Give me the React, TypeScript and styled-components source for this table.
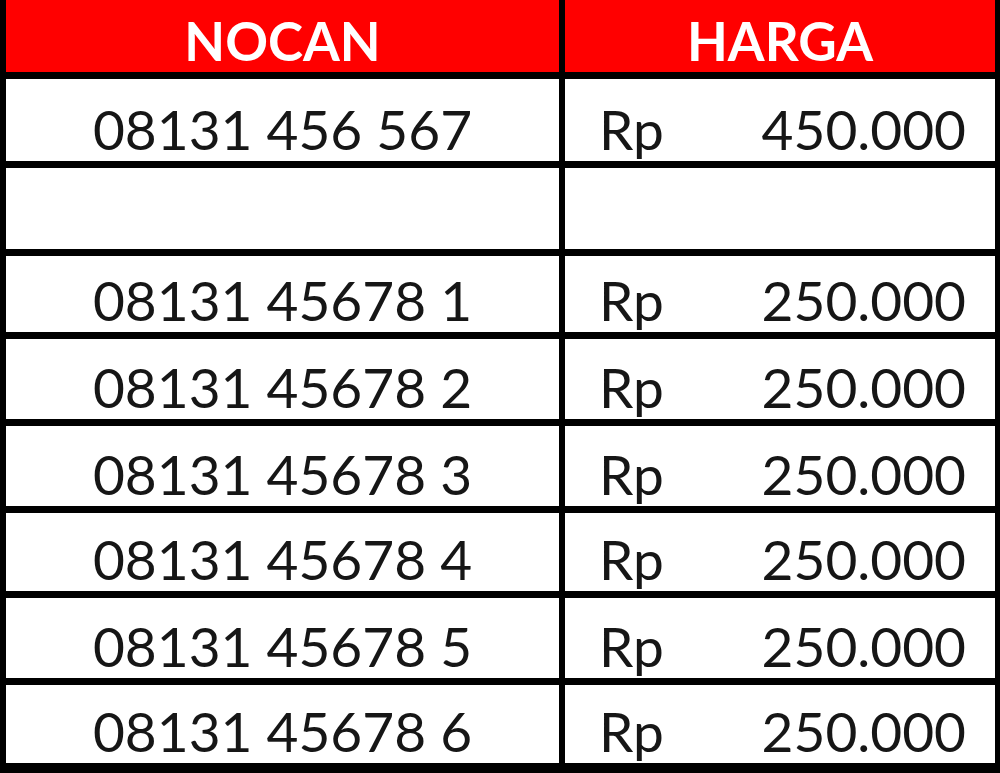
import React from "react";
import styled, { createGlobalStyle } from "styled-components";

const Global = createGlobalStyle`
  html, body { margin: 0; padding: 0; background: #000; }
  body { font-family: "Lato", "Open Sans", sans-serif; }
`;

const Table = styled.div`
  display: grid;
  grid-template-columns: 553px 430px;
  grid-template-rows: 72px 82px 81px 76px 80px 80px 78px 80px 78px;
  column-gap: 6px;
  row-gap: 7px;
  padding: 0 5px 10px 6px;
  width: 1000px;
  height: 773px;
  box-sizing: border-box;
  background: #000;
`;

const HeaderCell = styled.div`
  background: #ff0000;
  color: #fff;
  font-weight: 700;
  font-size: 53px;
  line-height: 1;
  display: flex;
  align-items: flex-end;
  justify-content: center;
  padding-bottom: 5px;
  box-sizing: border-box;
`;

const NumberCell = styled.div`
  background: #fff;
  color: #161616;
  font-size: 55px;
  line-height: 1;
  display: flex;
  align-items: flex-end;
  justify-content: center;
  padding-bottom: 4px;
  box-sizing: border-box;
  white-space: pre;
`;

const PriceCell = styled.div`
  background: #fff;
  color: #161616;
  font-size: 55px;
  line-height: 1;
  display: flex;
  align-items: flex-end;
  justify-content: space-between;
  padding: 0 29px 4px 34px;
  box-sizing: border-box;
`;

const rows: Array<{ no: string; price: string } | null> = [
  { no: "08131 456 567", price: "450.000" },
  null,
  { no: "08131 45678 1", price: "250.000" },
  { no: "08131 45678 2", price: "250.000" },
  { no: "08131 45678 3", price: "250.000" },
  { no: "08131 45678 4", price: "250.000" },
  { no: "08131 45678 5", price: "250.000" },
  { no: "08131 45678 6", price: "250.000" },
];

export default function App() {
  return (
    <>
      <Global />
      <Table>
        <HeaderCell>NOCAN</HeaderCell>
        <HeaderCell>HARGA</HeaderCell>
        {rows.map((r, i) =>
          r ? (
            <React.Fragment key={i}>
              <NumberCell>{r.no}</NumberCell>
              <PriceCell>
                <span>Rp</span>
                <span>{r.price}</span>
              </PriceCell>
            </React.Fragment>
          ) : (
            <React.Fragment key={i}>
              <NumberCell />
              <PriceCell />
            </React.Fragment>
          )
        )}
      </Table>
    </>
  );
}
